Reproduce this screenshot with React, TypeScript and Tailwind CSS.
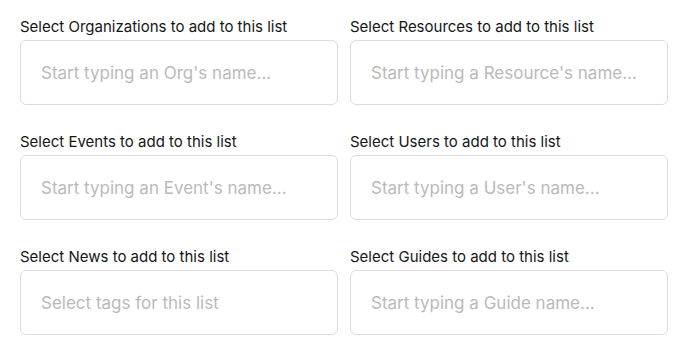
const fields = [
  { label: 'Select Organizations to add to this list', placeholder: "Start typing an Org's name..." },
  { label: 'Select Resources to add to this list', placeholder: "Start typing a Resource's name..." },
  { label: 'Select Events to add to this list', placeholder: "Start typing an Event's name..." },
  { label: 'Select Users to add to this list', placeholder: "Start typing a User's name..." },
  { label: 'Select News to add to this list', placeholder: 'Select tags for this list' },
  { label: 'Select Guides to add to this list', placeholder: 'Start typing a Guide name...' },
]

export default function App() {
  return (
    <div className="bg-white min-h-[358px] px-5 pt-[16px] font-['Inter',sans-serif]">
      <div className="grid grid-cols-2 gap-x-[12px] gap-y-[26px]">
        {fields.map((f) => (
          <div key={f.label} className="flex flex-col">
            <label className="text-[15px] leading-[22px] text-[#161616] mb-[2px]">{f.label}</label>
            <input
              type="text"
              placeholder={f.placeholder}
              className="h-[65px] w-full rounded-[6px] border border-[#dcdcdc] px-5 text-[17px] text-[#111] placeholder:text-[#bababa] outline-none"
            />
          </div>
        ))}
      </div>
    </div>
  )
}
